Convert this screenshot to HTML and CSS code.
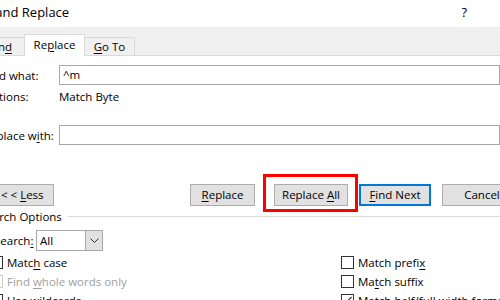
FILE: index.html
```html
<!DOCTYPE html>
<html lang="en">
<head>
    <meta charset="UTF-8">
    <title>Find and Replace</title>
    <link rel="stylesheet" href="styles.css">
</head>
<body>
    <div class="dialog">
        <div class="titlebar">
            <span class="title">Find and Replace</span>
            <span class="help">?</span>
        </div>

        <div class="tabs">
            <span class="tab tab-find">Fin<u>d</u></span>
            <span class="tab active">Re<u>p</u>lace</span>
            <span class="tab tab-goto"><u>G</u>o To</span>
        </div>

        <div class="panel">
            <div class="field">
                <span class="label">Fi<u>n</u>d what:</span>
                <div class="textbox">^m</div>
            </div>
            <div class="field options">
                <span class="label">Options:</span>
                <span>Match Byte</span>
            </div>
            <div class="field replace">
                <span class="label">Replace w<u>i</u>th:</span>
                <div class="textbox"></div>
            </div>

            <div class="buttons">
                <span class="btn btn-less">&lt; &lt; <u>L</u>ess</span>
                <span class="btn btn-replace"><u>R</u>eplace</span>
                <span class="mark">
                    <span class="btn btn-all">Replace <u>A</u>ll</span>
                </span>
                <span class="btn btn-next default"><u>F</u>ind Next</span>
                <span class="btn btn-cancel">Cancel</span>
            </div>

            <div class="group-title">
                <span>Search Options</span>
                <span class="rule"></span>
            </div>

            <div class="search-row">
                <span class="search-label">Search<u>:</u></span>
                <span class="select">
                    <span class="select-value">All</span>
                    <span class="select-arrow">
                        <svg width="9" height="5" viewBox="0 0 9 5"><path d="M0.5 0.5 L4.5 4.5 L8.5 0.5" fill="none" stroke="#333" stroke-width="1"/></svg>
                    </span>
                </span>
            </div>

            <div class="checks">
                <label class="check"><span class="box"></span><span>Matc<u>h</u> case</span></label>
                <label class="check"><span class="box"></span><span>Match prefi<u>x</u></span></label>
                <label class="check disabled"><span class="box"></span><span>Find <u>w</u>hole words only</span></label>
                <label class="check"><span class="box"></span><span>Ma<u>t</u>ch suffix</span></label>
                <label class="check"><span class="box"></span><span>U<u>s</u>e wildcards</span></label>
                <label class="check"><span class="box checked">
                    <svg width="11" height="11" viewBox="0 0 11 11"><path d="M1.5 5.5 L4 8 L9.5 2" fill="none" stroke="#333" stroke-width="1.2"/></svg>
                </span><span>Match half/full width forms</span></label>
            </div>
        </div>
    </div>
</body>
</html>
```

FILE: styles.css
```css
*{
    box-sizing: border-box;
}

body{
    margin: 0;
    width: 500px;
    height: 300px;
    overflow: hidden;
    background: #fff;
    font-family: "Open Sans", "Noto Sans", sans-serif;
    font-size: 11.5px;
    color: #000;
}

u{
    text-decoration-thickness: 1px;
    text-underline-offset: 2px;
}

.dialog{
    width: 560px;
    margin-left: -34px;
}

/* title */
.titlebar{
    display: flex;
    align-items: center;
    height: 27px;
    padding-bottom: 3px;
}

.title{
    font-size: 13px;
    flex: 1;
}

.help{
    font-size: 13px;
    margin-right: 59px;
}

/* tabs */
.tabs{
    display: flex;
    align-items: flex-end;
    height: 29px;
    padding-left: 21px;
    background: #f0f0f0;
    border-bottom: 1px solid #d9d9d9;
}

.tab{
    height: 18px;
    border: 1px solid #d9d9d9;
    border-bottom: none;
    text-align: center;
    line-height: 17px;
}

.tab-find{ width: 37px; border-right: none; text-align: right; padding-right: 12px; }
.tab-goto{ width: 50px; border-left: none; }

.tab.active{
    width: 61px;
    height: 22px;
    margin-bottom: -1px;
    background: #fff;
    line-height: 20px;
}

/* fields */
.panel{
    padding-top: 9px;
}

.field{
    display: flex;
    align-items: center;
    padding-left: 17px;
}

.label{
    width: 76px;
}

.textbox{
    flex: 1;
    height: 20px;
    margin-right: 26px;
    border: 1px solid #a8a8a8;
    padding: 0 3px;
    line-height: 18px;
}

.options{
    height: 14px;
    margin-top: 4px;
}

.replace{
    margin-top: 22px;
}

/* buttons */
.buttons{
    display: flex;
    align-items: center;
    margin-top: 39px;
    padding-left: 13px;
}

.btn{
    display: block;
    flex-shrink: 0;
    height: 22px;
    background: #e1e1e1;
    border: 1px solid #adadad;
    text-align: center;
    line-height: 20px;
    white-space: nowrap;
}

.btn-less{ width: 75px; text-align: left; padding-left: 21px; }
.btn-replace{ width: 65px; margin-left: 136px; }
.mark{ position: relative; margin-left: 19px; }
.btn-all{ width: 74px; }
.btn-next{ width: 72px; margin-left: 11px; }
.btn-cancel{ width: 80px; margin-left: 11px; }

.btn.default{
    border: 2px solid #0078d7;
    line-height: 18px;
}

/* red annotation box */
.mark::after{
    content: "";
    position: absolute;
    top: -10px;
    bottom: -6px;
    left: -11px;
    right: -10px;
    border: 3px solid #ff0000;
}

/* search options */
.group-title{
    display: flex;
    align-items: center;
    height: 16px;
    margin-top: 2px;
    padding-left: 14px;
}

.rule{
    flex: 1;
    height: 1px;
    margin-left: 6px;
    background: #dcdcdc;
}

.search-row{
    display: flex;
    align-items: center;
    margin-top: 6px;
    padding-left: 28px;
}

.search-label{
    width: 42px;
}

.select{
    display: flex;
    width: 67px;
    height: 21px;
    border: 1px solid #a8a8a8;
}

.select-value{
    flex: 1;
    padding-left: 3px;
    line-height: 19px;
}

.select-arrow{
    display: flex;
    justify-content: center;
    align-items: center;
    width: 17px;
    background: #e1e1e1;
    border-left: 1px solid #a8a8a8;
}

.checks{
    display: grid;
    grid-template-columns: 351px 1fr;
    grid-auto-rows: 19px;
    margin-top: 2px;
    padding-left: 24px;
}

.check{
    display: flex;
    align-items: center;
    white-space: nowrap;
}

.box{
    display: flex;
    justify-content: center;
    align-items: center;
    flex-shrink: 0;
    width: 13px;
    height: 13px;
    margin-right: 4px;
    border: 1px solid #333;
    background: #fff;
}

.check.disabled{
    color: #a0a0a0;
}

.check.disabled .box{
    border-color: #cccccc;
}
```
